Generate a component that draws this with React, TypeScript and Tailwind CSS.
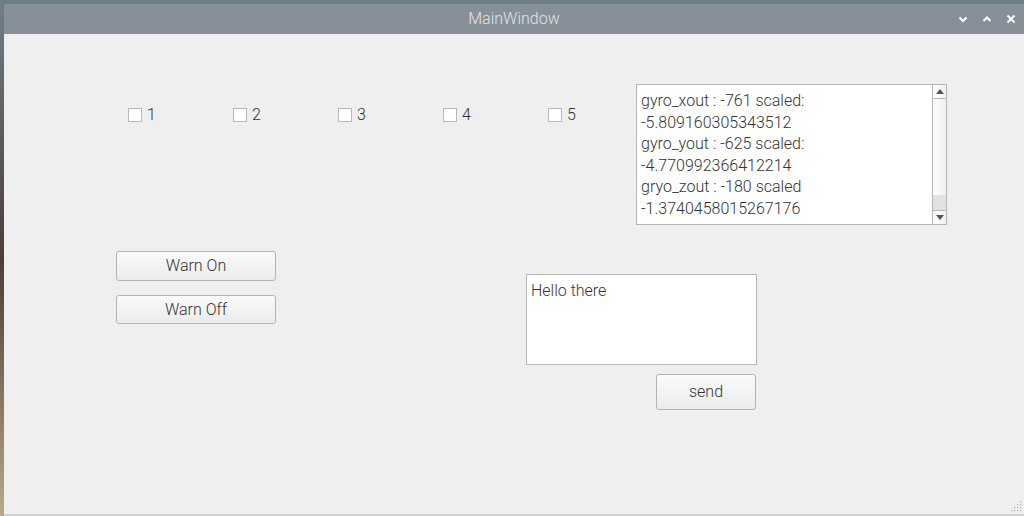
import React from "react";

const font = { fontFamily: "Roboto, 'Liberation Sans', sans-serif" };

function Check({ label }: { label: string }) {
  return (
    <div className="flex w-[105px] items-center">
      <div className="h-[14px] w-[14px] border border-[#b9b9b9] bg-white" />
      <span className="ml-[5px] text-[16px] font-light leading-[20px] text-[#333]">{label}</span>
    </div>
  );
}

function Btn({ label, cls }: { label: string; cls: string }) {
  return (
    <div
      className={`flex items-center justify-center rounded-[3px] border border-[#b3b3b3] bg-gradient-to-b from-[#fbfbfb] to-[#ebebeb] text-[16px] font-light text-[#333] ${cls}`}
    >
      {label}
    </div>
  );
}

export default function App() {
  return (
    <div
      className="h-[516px] w-[1024px] overflow-hidden bg-gradient-to-b from-[#6f7f87] via-[#4b3e3a] to-[#b9a98a]"
      style={font}
    >
      <div className="ml-[4px] mt-[4px] flex h-[512px] w-[1020px] flex-col">
        {/* title bar */}
        <div className="relative flex h-[30px] items-center justify-center rounded-tl-[3px] bg-[#878f98]">
          <span className="text-[16px] font-light text-[#e2e5e8]">MainWindow</span>
          <div className="absolute right-[8px] top-0 flex h-full items-center gap-[14px]">
            <svg width="10" height="10" viewBox="0 0 10 10">
              <path d="M1.5 3.5 L5 7 L8.5 3.5" stroke="#fff" strokeWidth="2" fill="none" />
            </svg>
            <svg width="10" height="10" viewBox="0 0 10 10">
              <path d="M1.5 7 L5 3.5 L8.5 7" stroke="#fff" strokeWidth="2" fill="none" />
            </svg>
            <svg width="10" height="10" viewBox="0 0 10 10">
              <path d="M1.5 1.5 L8.5 8.5 M8.5 1.5 L1.5 8.5" stroke="#fff" strokeWidth="2" fill="none" />
            </svg>
          </div>
        </div>
        {/* content */}
        <div className="relative flex flex-1 flex-col border-b-[2px] border-[#cfcfcf] bg-[#efefef]">
          {/* row A */}
          <div className="flex pt-[50px]">
            <div className="flex w-[632px] pl-[124px] pt-[21px]">
              <div className="flex h-[20px] items-center">
                <Check label="1" />
                <Check label="2" />
                <Check label="3" />
                <Check label="4" />
                <Check label="5" />
              </div>
            </div>
            <div className="flex h-[141px] w-[311px] border border-[#b5b5b5] bg-white">
              <div className="flex-1 pl-[4px] pt-[5px] text-[16px] font-light leading-[21.5px] text-[#333]">
                <div>gyro_xout : -761 scaled:</div>
                <div>-5.809160305343512</div>
                <div>gyro_yout : -625 scaled:</div>
                <div>-4.770992366412214</div>
                <div>gryo_zout : -180 scaled</div>
                <div>-1.3740458015267176</div>
              </div>
              <div className="flex w-[14px] flex-col border-l border-[#b5b5b5] bg-gradient-to-r from-white to-[#f0f0f0]">
                <div className="flex h-[14px] items-center justify-center border-b border-[#b5b5b5]">
                  <svg width="8" height="5" viewBox="0 0 8 5">
                    <path d="M0 5 L4 0 L8 5 Z" fill="#555" />
                  </svg>
                </div>
                <div className="flex-1" />
                <div className="h-[15px] bg-[#e2e2e2]" />
                <div className="flex h-[14px] items-center justify-center border-t border-[#b5b5b5]">
                  <svg width="8" height="5" viewBox="0 0 8 5">
                    <path d="M0 0 L4 5 L8 0 Z" fill="#555" />
                  </svg>
                </div>
              </div>
            </div>
          </div>
          {/* row B */}
          <div className="mt-[26px] flex">
            <div className="flex w-[522px] flex-col gap-[14px] pl-[112px]">
              <Btn label="Warn On" cls="h-[30px] w-[160px]" />
              <Btn label="Warn Off" cls="h-[29px] w-[160px]" />
            </div>
            <div className="mt-[23px] flex flex-col">
              <div className="h-[91px] w-[231px] border border-[#b5b5b5] bg-white pl-[4px] pt-[5px] text-[16px] font-light leading-[21px] text-[#333]">
                Hello there
              </div>
              <Btn label="send" cls="ml-[130px] mt-[9px] h-[36px] w-[100px]" />
            </div>
          </div>
          {/* resize grip */}
          <div className="absolute bottom-[2px] right-[2px]">
            <svg width="12" height="12" viewBox="0 0 12 12">
              {[
                [10, 1],
                [7, 4], [10, 4],
                [4, 7], [7, 7], [10, 7],
                [1, 10], [4, 10], [7, 10], [10, 10],
              ].map(([x, y], i) => (
                <rect key={i} x={x} y={y} width="1.2" height="1.2" fill="#aaa" />
              ))}
            </svg>
          </div>
        </div>
      </div>
    </div>
  );
}
